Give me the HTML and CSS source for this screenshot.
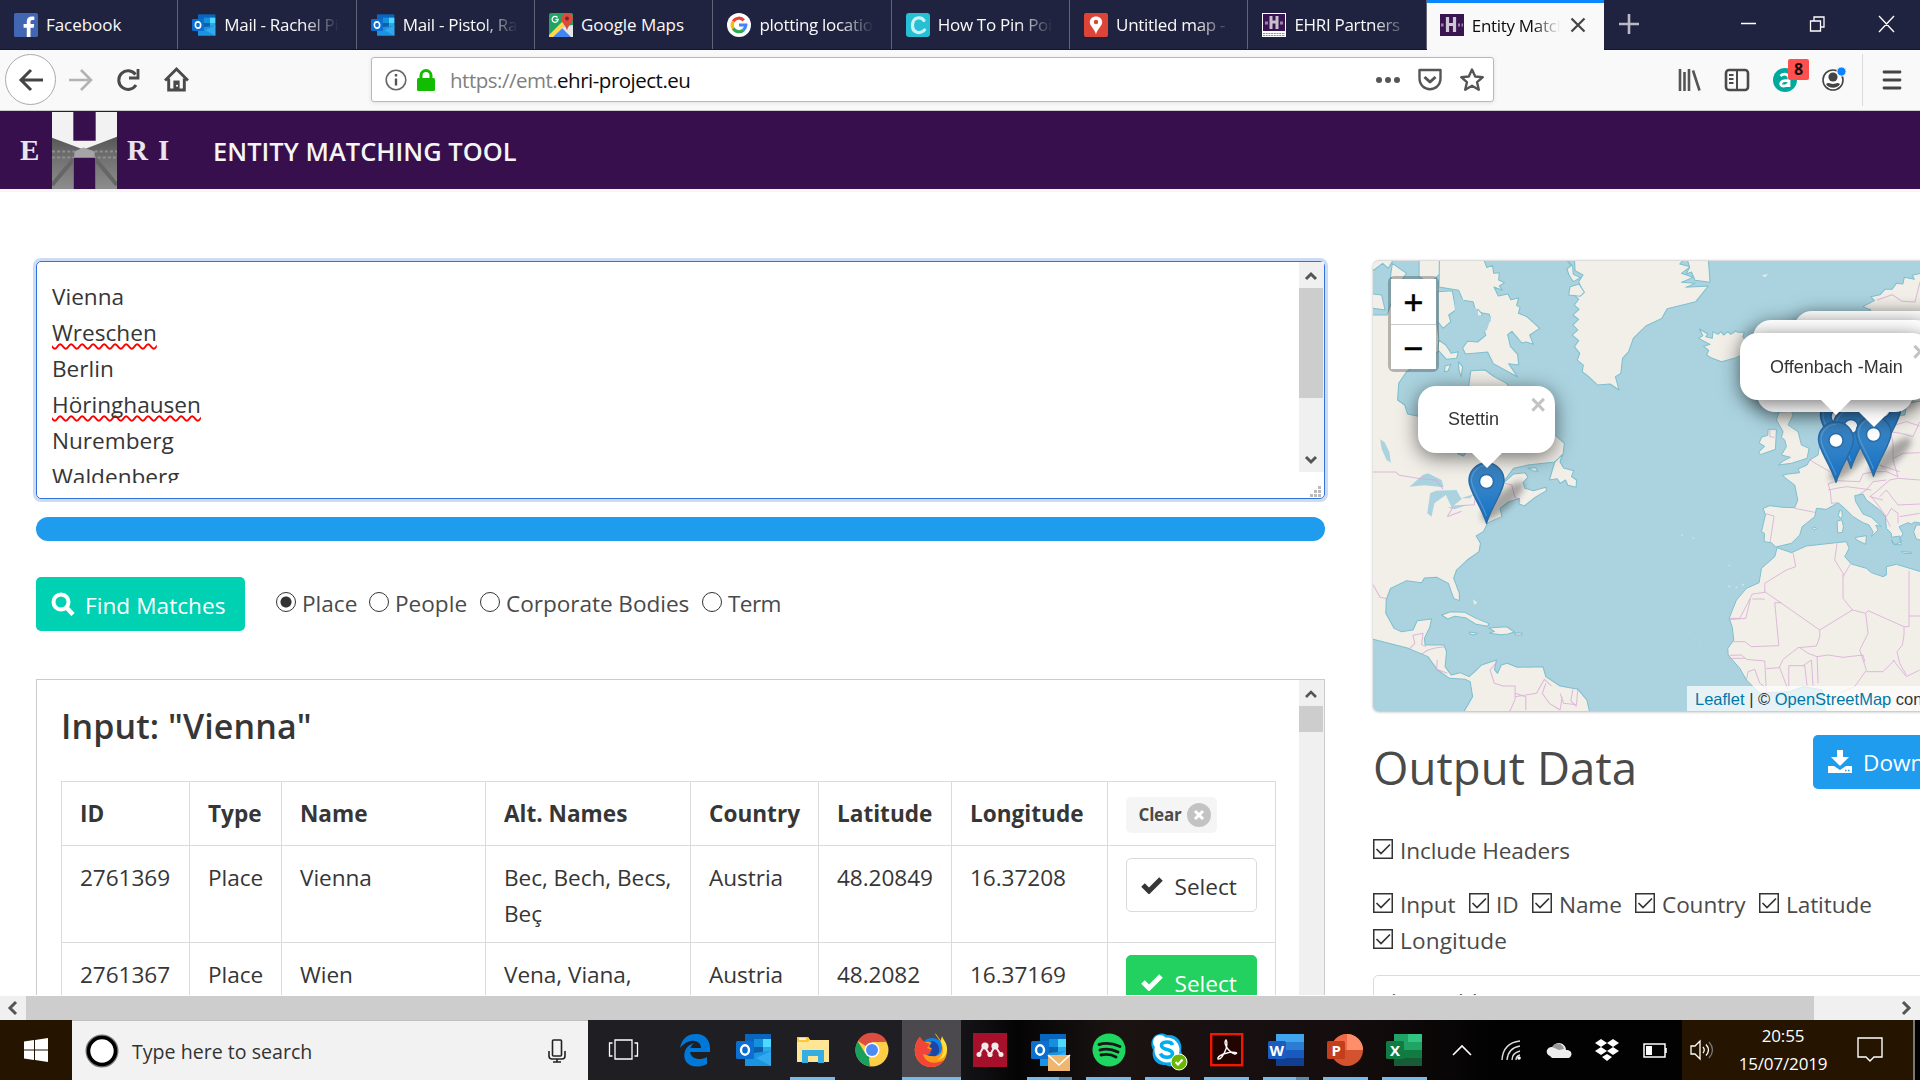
FILE: index.html
```html
<!DOCTYPE html>
<html lang="en">
<head>
<meta charset="utf-8">
<title>Entity Matching Tool</title>
<link rel="stylesheet" href="styles.css">
</head>
<body>
<svg class="defs" width="0" height="0">
  <defs>
    <linearGradient id="pinFill" x1="0" y1="0" x2="0" y2="1"><stop offset="0" stop-color="#3a82c0"/><stop offset=".5" stop-color="#2f80c6"/><stop offset="1" stop-color="#126fc6"/></linearGradient>
    <symbol id="pin" viewBox="0 0 38 62"><path d="M19 1C9 1 1.500 9 1.500 18.500 1.500 29 13 42 19 61 25 42 36.500 29 36.500 18.500 36.500 9 29 1 19 1z" fill="url(#pinFill)" stroke="#2a6ba3" stroke-width="1.500"/><path d="M19 3.500C10.500 3.500 4 10.500 4 18.500 4 27 13 38 19 54" fill="none" stroke="#6aa9da" stroke-width="1.200" opacity=".6"/><circle cx="19" cy="19.500" r="7" fill="#fff" stroke="#2b6da6" stroke-width="1.500"/></symbol>
    <symbol id="outlook" viewBox="0 0 36 34"><path d="M9 1h26v18H9z" fill="#0a66bd"/><path d="M18 6h9v8h-9z" fill="#1490df"/><path d="M27 6h8v8h-8z" fill="#50d9ff"/><path d="M18 14h9v8h-9z" fill="#0f5fa8"/><path d="M27 14h8v6h-8z" fill="#28a8ea"/><path d="M9 21l26-3v15H9z" fill="#1a94e0"/><path d="M35 18v15L20 25z" fill="#32a9ec"/><rect x="0" y="8" width="18" height="18" rx="1.500" fill="#0a6fd0"/><ellipse cx="9" cy="17" rx="4" ry="4.700" fill="none" stroke="#fff" stroke-width="2.400"/></symbol>
    <symbol id="check" viewBox="0 0 22 18"><path d="M2 9l6 6L20 3" fill="none" stroke="currentColor" stroke-width="5"/></symbol>
    <symbol id="ehri" viewBox="0 0 24 24"><path d="M0 1h24v22H0z" fill="#3a1450"/><path d="M7.500 4v15M14.500 4v15M8 11.500h7" stroke="#cfc8d4" stroke-width="3.200"/><path d="M1 12h2.500M18 12h2M21.500 12h1.500" stroke="#9b83a8" stroke-width="3"/></symbol>
    <symbol id="tick" viewBox="0 0 20 20"><rect x=".75" y=".75" width="18.500" height="18.500" fill="#fff" stroke="#333" stroke-width="1.500"/><path d="M3.500 10l4.500 4.500L17 5.500" fill="none" stroke="#333" stroke-width="1.700"/></symbol>
  </defs>
</svg>

<div class="tabs">
  <div class="tab"><svg class="fav" viewBox="0 0 24 24"><rect width="24" height="24" rx="1.500" fill="#4267b2"/><path d="M16.500 24v-9.300h3.200l.5-3.600h-3.700V8.800c0-1 .4-1.800 1.900-1.800h1.900V3.700c-4.800-.7-7.500.8-7.500 4.700v2.700h-3.200v3.600h3.200V24z" fill="#fff"/></svg><span class="tab-text t1">Facebook</span></div>
  <div class="tab"><svg class="fav"><use href="#outlook"/></svg><span class="tab-text">Mail - Rachel Pistol</span></div>
  <div class="tab"><svg class="fav"><use href="#outlook"/></svg><span class="tab-text">Mail - Pistol, Rachel</span></div>
  <div class="tab"><svg class="fav" viewBox="0 0 24 24"><rect width="24" height="24" rx="2" fill="#1fa463"/><path d="M2 24L14 11l10 12v1z" fill="#4285f4"/><path d="M0 22L16 6l3 4L4 24H0z" fill="#ffd84d"/><path d="M24 24V12l-8 1-3 2 9 9z" fill="#e6e6e6"/><path d="M18 0c-3.500 0-6 2.500-6 5.500 0 3.500 5 7 6 12 1-5 6-8.500 6-12C24 2.500 21.500 0 18 0z" fill="#dd4b3e"/><circle cx="18" cy="5.500" r="2" fill="#822"/><path d="M8.500 4.500a3 3 0 1 0 .6 2H6.500" fill="none" stroke="#fff" stroke-width="1.300"/></svg><span class="tab-text t4">Google Maps</span></div>
  <div class="tab"><svg class="fav" viewBox="0 0 24 24"><circle cx="12" cy="12" r="12" fill="#fff"/><g fill="none" stroke-width="3.200"><path d="M6.200 8.500A6.700 6.700 0 0 1 16.800 7.300" stroke="#ea4335"/><path d="M6.200 15.500A6.700 6.700 0 0 1 6.200 8.500" stroke="#fbbc05"/><path d="M16.500 17A6.700 6.700 0 0 1 6.200 15.400" stroke="#34a853"/><path d="M12 12h6.800a6.700 6.700 0 0 1-2.400 5" stroke="#4285f4"/></g></svg><span class="tab-text">plotting locations</span></div>
  <div class="tab"><svg class="fav" viewBox="0 0 24 24"><rect width="24" height="24" rx="3" fill="#26bfd4"/><path d="M18 7.500C15 3 7 4 6.500 12 6 20 14.500 21.500 18.500 17" fill="none" stroke="#c9f2f7" stroke-width="3.200" stroke-linecap="round"/></svg><span class="tab-text">How To Pin Point</span></div>
  <div class="tab"><svg class="fav" viewBox="0 0 24 24"><rect width="24" height="24" rx="2" fill="#db4437"/><path d="M12 3.500c-3.700 0-6.200 2.500-6.200 5.700 0 4 5 6.500 6.200 12.300 1.200-5.800 6.200-8.300 6.200-12.300 0-3.200-2.500-5.700-6.200-5.700z" fill="#fff"/><circle cx="12" cy="9" r="2.200" fill="#db4437"/></svg><span class="tab-text">Untitled map - Goo</span></div>
  <div class="tab"><svg class="fav" viewBox="0 0 24 24"><rect width="24" height="24" fill="#fff"/><path d="M1 1h22v17H1z" fill="#3a1450"/><path d="M9 3v13M15 3v13M9 9h6" stroke="#c9c0cf" stroke-width="3"/><path d="M3 10h3M18 10h3" stroke="#9b83a8" stroke-width="3"/><path d="M1 20.500h22M1 22.500h22" stroke="#c07a9c" stroke-dasharray="2 .7"/></svg><span class="tab-text">EHRI Partners | EH</span></div>
  <div class="tab active"><svg class="fav"><use href="#ehri"/></svg><span class="tab-text">Entity Matching</span><svg class="close" viewBox="0 0 16 16"><path d="M1.500 1.500l13 13M14.500 1.500l-13 13" stroke="#444" stroke-width="2.200"/></svg></div>
  <svg class="newtab" viewBox="0 0 22 22"><path d="M11 1v20M1 11h20" stroke="#b9bac3" stroke-width="2.600"/></svg>
  <svg class="winbtns" viewBox="0 0 160 24"><path d="M1 11.500h15M70.500 9h10v10h-10zM74 9V5h10v10h-3.500M139 4l15 16M154 4l-15 16" fill="none" stroke="#fff" stroke-width="1.300"/></svg>
</div>

<div class="toolbar">
  <div class="back"><svg width="28" height="24" viewBox="0 0 28 24"><path d="M26 12H4M14 2L4 12l10 10" fill="none" stroke="#444" stroke-width="3"/></svg></div>
  <svg class="fwd" viewBox="0 0 26 24"><path d="M1 12h21M13 2l10 10-10 10" fill="none" stroke="#b3b3b3" stroke-width="2.600"/></svg>
  <svg class="reload" viewBox="0 0 24 24"><path d="M20 17A9.300 9.300 0 1 1 19.500 6.500" fill="none" stroke="#4a4a4a" stroke-width="3"/><path d="M22 1v9h-9" fill="none" stroke="#4a4a4a" stroke-width="2.800"/></svg>
  <svg class="home" viewBox="0 0 24 24"><path d="M1 13L12 2l11 11M4.500 11v11h15V11" fill="none" stroke="#4a4a4a" stroke-width="2.800"/><path d="M9 22v-9h6v9z" fill="#4a4a4a"/><circle cx="12.500" cy="18" r="1" fill="#fff"/></svg>
  <div class="urlbar">
    <svg class="info" viewBox="0 0 22 22"><circle cx="11" cy="11" r="9.800" fill="none" stroke="#666" stroke-width="1.600"/><path d="M11 9.500v7M11 5v2.500" stroke="#555" stroke-width="2.400"/></svg>
    <svg class="lock" viewBox="0 0 18 22"><rect y="9" width="18" height="13" rx="1.500" fill="#12bc00"/><path d="M4 10V6.500a5 5 0 0 1 10 0V10" fill="none" stroke="#12bc00" stroke-width="3"/></svg>
    <span class="url"><span class="dim">https://emt.</span>ehri-project.eu</span>
    <svg class="urlicons" viewBox="0 0 110 28"><g fill="#555"><circle cx="4" cy="14" r="3"/><circle cx="13" cy="14" r="3"/><circle cx="22" cy="14" r="3"/></g><g fill="none" stroke="#555" stroke-width="2.400" stroke-linejoin="round"><path d="M44.500 4h21v8c0 15-21 15-21 0z"/><path d="M49.500 11l5.500 5 5.500-5" stroke-width="3"/><path d="M97 3.500l3.200 7 7.600.7-5.700 5 1.700 7.500-6.800-4-6.800 4 1.700-7.500-5.700-5 7.600-.7z"/></g></svg>
  </div>
  <svg class="righticons" viewBox="0 0 242 60">
    <path d="M4 19v22M8.500 22v19M13 19v22M17 20.500l6.500 20" stroke="#555" stroke-width="2.600"/>
    <rect x="50" y="20" width="22" height="20" rx="3" fill="none" stroke="#4a4a4a" stroke-width="2.600"/><path d="M61 20v20M53 25h4.500M53 29h4.500M53 33h4.500" stroke="#4a4a4a" stroke-width="2"/>
    <circle cx="109" cy="30" r="12" fill="#00a99d"/><path d="M104.500 26c3-3 8.500-2.200 8.500 2v9m0-6c-9-2-10.500 5-5.500 5 3 0 5.500-2 5.500-4" fill="none" stroke="#fff" stroke-width="2.800"/>
    <rect x="112" y="9" width="21" height="21" rx="2" fill="#ff4f4f"/>
    <circle cx="157" cy="30" r="10" fill="#fff" stroke="#444" stroke-width="1.600"/><circle cx="157" cy="27" r="4.600" fill="#444"/><path d="M150 34c3-2 4 0 7 0s4-2 7 0c-2.500 5-11.500 5-14 0z" fill="#444"/><circle cx="165.500" cy="21.500" r="4.600" fill="#0a84ff" stroke="#f9f9fa" stroke-width="1"/>
    <path d="M186.500 4v52" stroke="#dcdcdc"/><path d="M208 22h16M208 30h16M208 38h16" stroke="#444" stroke-width="2.800" stroke-linecap="round"/>
    <text x="118" y="25" class="count">8</text>
  </svg>
</div>

<header class="header">
  <div class="logo"><span>E</span>
    <svg viewBox="0 0 64 78" preserveAspectRatio="none"><defs><linearGradient id="road" x1="0" y1="0" x2="0" y2="1"><stop offset="0" stop-color="#555"/><stop offset=".4" stop-color="#707070"/><stop offset="1" stop-color="#8d8d8d"/></linearGradient><clipPath id="hh"><path d="M0 0h21v29h22V0h21v78H43V46H21v32H0z"/></clipPath></defs><g clip-path="url(#hh)"><path d="M0 0h64v78H0z" fill="#f2f2f2"/><path d="M0 26l31 12 33-13v53H0z" fill="url(#road)"/><path d="M0 40h22M0 46h26M42 40h22M40 46h24" stroke="#8f8f8f" stroke-width="2" stroke-dasharray="3 2"/><path d="M0 74l21-26M64 74L43 48" stroke="#666" stroke-width="4"/><path d="M22 40l9-4 11 4v6H22z" fill="#a5a5a5"/></g></svg>
    <span class="r">R</span><span>I</span></div>
  <h1>ENTITY MATCHING TOOL</h1>
</header>

<main class="main">
  <section class="left">
    <div class="textarea">
      <div class="lines"><div>Vienna</div><div><span class="miss">Wreschen</span></div><div>Berlin</div><div><span class="miss">Höringhausen</span></div><div>Nuremberg</div><div>Waldenberg</div></div>
      <div class="vscroll ta"><svg viewBox="0 0 24 26"><path d="M7 17l5-5 5 5" fill="none" stroke="#555" stroke-width="3"/></svg><div class="thumb"></div><svg viewBox="0 0 24 26"><path d="M7 11l5 5 5-5" fill="none" stroke="#555" stroke-width="3"/></svg></div>
      <svg class="grip" viewBox="0 0 12 12" fill="#bbb"><path d="M0 9h3v3H0zM4 9h3v3H4zM8 9h3v3H8zM4 5h3v3H4zM8 5h3v3H8zM8 1h3v3H8z"/></svg>
    </div>
    <div class="progress"></div>
    <div class="controls">
      <button class="btn primary"><svg width="24" height="24" viewBox="0 0 24 24"><circle cx="10" cy="10" r="7.500" fill="none" stroke="#fff" stroke-width="4"/><path d="M15.500 15.500l6.500 7" stroke="#fff" stroke-width="4.500"/></svg><span>Find Matches</span></button>
      <div class="radios">
        <i class="radio on"></i><span class="w1">Place</span><i class="radio"></i><span class="w2">People</span><i class="radio"></i><span class="w3">Corporate Bodies</span><i class="radio"></i><span class="w4">Term</span>
      </div>
    </div>
    <div class="results">
      <div class="results-body">
        <h3>Input: "Vienna"</h3>
        <table>
          <colgroup><col class="c1"><col class="c2"><col class="c3"><col class="c4"><col class="c5"><col class="c6"><col class="c7"><col class="c8"></colgroup>
          <tr class="head"><th>ID</th><th>Type</th><th>Name</th><th>Alt. Names</th><th>Country</th><th>Latitude</th><th>Longitude</th><th class="act"><span class="tag">Clear<svg width="24" height="24" viewBox="0 0 24 24"><circle cx="12" cy="12" r="12" fill="#c3c3c3"/><path d="M8 8l8 8M16 8l-8 8" stroke="#fff" stroke-width="3"/></svg></span></th></tr>
          <tr><td>2761369</td><td>Place</td><td>Vienna</td><td>Bec, Bech, Becs, Beç</td><td>Austria</td><td>48.20849</td><td>16.37208</td><td class="act"><button class="btn select"><svg width="22" height="18"><use href="#check"/></svg>Select</button></td></tr>
          <tr><td>2761367</td><td>Place</td><td>Wien</td><td>Vena, Viana,</td><td>Austria</td><td>48.2082</td><td>16.37169</td><td class="act"><button class="btn select chosen"><svg width="22" height="18"><use href="#check"/></svg>Select</button></td></tr>
        </table>
      </div>
      <div class="vscroll"><svg viewBox="0 0 24 26"><path d="M7 17l5-5 5 5" fill="none" stroke="#555" stroke-width="2.600"/></svg><div class="thumb short"></div></div>
    </div>
  </section>

  <section class="right">
    <div class="map">
      <svg class="world" viewBox="36 33 1532 1350" preserveAspectRatio="none">
        <g class="land">
          <path d="M20 195H75L90 150 130 160 215 220 225 300 130 365 108 400 105 450 125 465 133 492 170 500 230 560 275 612 290 618 300 600 290 520 305 400 310 362 350 360 375 380 410 400 440 440 470 430 500 470 546 555 572 580 568 616 545 636 470 645 430 655 405 690 400 700 430 672 462 668 470 682 456 698 462 715 485 722 520 712 522 722 490 742 460 768 445 762 446 745 415 756 392 775 397 800 358 818 345 845 325 858 337 880 333 905 300 930 270 960 262 985 278 1030 278 1052 262 1045 247 1000 215 982 180 984 172 998 130 992 85 1015 73 1050 72 1090 95 1135 115 1145 148 1140 160 1112 200 1107 195 1132 180 1165 182 1185 235 1185 242 1205 238 1250 255 1275 280 1268 305 1280 318 1268 340 1245 382 1230 376 1258 385 1270 395 1245 412 1240 440 1252 512 1250 520 1280 560 1308 610 1318 635 1350 645 1395H285L315 1340 308 1295 295 1288 250 1285 215 1258 190 1220 135 1195 36 1168 20 1160z"/>
          <path d="M20 25h75l-16 30-16-15-24 20-19-5zM90 40l40 30-30 45-15-35zM165 25h60v45l-30 30-30-20zM20 130l40 5 10 45-34-5z"/>
          <path d="M222 25h123l10 28 16-7 3 24 16-2-2 22 16 8-14 10 8 13-23-10 12 27 27-6 8 17 22-5-6 22 10 6-5 18 24 10 36 35-28 20 10 28-20-7-12 3-28-35-12 10 8 35 20 24 3 32-28-4 25 40-68-40-16-35-62 6-8-18 14-20 28 2 23-20-8-25 20-18-2-20-38-8-8-30-28-4-12-30-55-10z"/>
          <path d="M218 125l40-3 10 58-20 15 6 20-22 20-14-20zM316 185l14-7 12 14-8 18-16-2zM220 270l20 15 15 25 20-5-5 20-28 3-24-28zM238 348l16-5-8 20-10 2zM275 335l12 15-4 30-6-18z"/>
          <path d="M600 25H910L895 42 925 50 900 70 932 82 900 97 938 100 912 112 975 108 940 155 860 176 845 205 800 228 765 265 752 305 735 325 730 370 715 380 725 420 700 402 665 405 640 380 622 365 625 345 608 330 615 310 600 290 612 272 594 255 610 240 596 225 612 208 596 195 613 178 600 165 612 148 600 135 622 120 612 95 624 75 602 62z"/>
          <path d="M575 25l20 23 2 25 20 10-20 12-12-20-6-18 12-10zM588 110l25-8 15 25-12 12-32-4zM915 25h60l5 72-42-6-10-25-15 6 10-20z"/>
          <path d="M948 265l12-8-10-20 24 15-6 8 18 5 2-20 14 8 8-8 8 10 12-10 8 8 14-10 6 4 18 0-4 14 10 12-8 40-26 12-36 10-26-10-16-10 6-14-14-12 18-6z"/>
          <path d="M1590 65L1546 76 1552 88 1524 82 1520 102 1502 100 1490 118 1470 118 1456 134 1430 140 1440 152 1408 170 1430 180 1415 200 1440 230 1470 470 1590 480z"/>
          <path d="M566 614L545 636 530 690 552 686 560 700 575 690 582 706 605 712 606 690 592 680 598 662 570 654 560 636zM470 654l22 0 6 10-14-2z"/>
          <path d="M228 1095l25-10 40 2 32 18 36 16-4 8-32-6-30-20-30-4-20 8zM360 1134l50-4 22 16-18 6-20 2-32-4 14-6zM308 1146l20 4-10 5-12-4zM434 1148l20 2-4 6-16-2z"/>
          <path class="isle" d="M1126 76l16-4-8 10zM1030 944l8 4-4 0zM1030 1006l8 4-4 2zM1050 1012l6-2 0 4zM1070 1004l6-4-4 8zM900 852l4 4-4 2zM932 860l4 4-4 2zM316 1048l12 10-8 6zM936 1166l4 2zM950 1190l4-4z"/>
        </g>
        <g class="land" transform="matrix(.933 0 0 1 1007.300 450)">
          <path d="M620 0L560 10 556 45 530 48 440 50 330 60 300 130 295 165 270 180 262 195 235 207 240 218 205 222 188 226 202 238 225 255 234 300 225 323 190 322 150 317 130 325 137 345 125 395 134 400 133 425 155 428 168 441 185 437 215 430 240 405 247 380 285 350 290 325 320 328 355 308 375 325 400 350 430 368 448 375 460 395 455 410 475 390 468 375 485 380 455 352 430 342 408 305 405 287 430 282 440 300 480 330 497 350 500 385 515 400 515 412 540 408 545 425 525 435 515 418 520 432 545 435 540 415 550 402 538 380 565 368 575 372 585 366 620 372z"/>
          <path d="M178 36L215 34 220 45 205 75 235 95 245 135 268 145 262 175 215 190 175 195 192 182 212 172 185 165 200 140 195 120 185 112 190 95 170 60zM145 88l25 0-3 60-45 16-5-8 18-17-17-10 8-18 18-5zM360 330l6 2 2 16-5 8-7-10zM352 364l14-5 5 20-3 18-14 2zM408 412l32-5-2 26-30-15zM545 455l32 2-2 4-24-1zM278 384l8-3 4 5-7 4zM590 375h30v50l-30-8-8-22z"/>
          <path d="M172 443L215 458 260 438 350 428 380 425 388 445 375 470 395 492 440 505 455 518 490 530 500 525 500 500 530 493 620 520V945H320L310 895 308 870 250 860 210 875 120 880 80 840 60 805 25 765 24 745 42 720 37 680 28 655 50 600 80 565 118 548 125 505 165 470z"/>
        </g>
        <g class="water"><path d="M138 710L175 675 190 670 228 690 234 712 180 706zM196 730L212 722 270 720 284 748 256 772 240 735 208 760 200 800 188 790zM245 772l55-8-35 14zM282 745l36-12-10 12zM56 568l12 8 14 30 4 32-12-8-14-34z"/><path d="M265 130L300 160 330 180 330 195 350 200 368 198 355 240 320 262 295 262 260 240 265 190z"/></g>
        <g class="borders"><path d="M36 666H100L110 676 170 686 212 690 232 718M244 800L262 768 320 764 325 700M244 800l40-16M405 700l20 6 8 34 16 16M36 1004l20 38 20 4M135 1200l18-20-5-24 28-6-4 34 12 6M170 1214l20-14 20-6 28-4M216 1230l-2 28 30 12M382 1236l-18 24 12 40 24 8 34 0 0 40-14 34-18 10M434 1330l30 10 0 40M434 1340l60-10 22-42 20 20M520 1300l-10 30 20 30 30 20 6-40M560 1330l10 30 36 4 4-50M596 1318l-6 34 16 18M1568 96l-14 60-36-2-28-20-42 16"/></g>
        <g class="borders" transform="matrix(.933 0 0 1 1007.300 450)">
          <path d="M220 458L228 500 200 510 135 550V577L98 582 60 655H28M98 597H135M92 597L78 655 28 659M135 575L300 690 398 630 370 595V520L345 480 352 430M370 530L392 492M185 608H165L177 737 95 740 75 725H38M300 690V710L290 738 235 743 190 778 178 803M398 630L438 640 445 632 553 680V705L548 735 532 755 540 790 560 825M438 640L445 700 420 750 440 810 405 860 360 880M553 680H568V512M568 648H600M295 850L292 770 325 765 370 772 430 765 435 785M140 880L135 783 80 778 65 765 30 766M30 775H75M140 806L180 803 205 870M207 860V797H255L262 857M250 797L275 780 280 857M240 743L265 760 292 770M80 840L85 815 105 808 120 850 135 860M440 815L490 815 525 780M520 780L560 830 600 810"/>
          <path d="M133 340L163 348 151 426M225 325L285 337M270 180L330 215M325 250L332 275 335 310 350 308M325 252L350 242 420 245 430 222 460 215 500 215 535 230M325 270L350 265 380 260 420 265 455 270M420 282L440 270 460 245 500 240M450 290L470 275 510 240 535 235 600 240M455 290L480 322M480 290L500 270 535 315 600 312M480 322L500 350 515 325 535 340 535 370M497 350L512 380M540 350L600 340M450 290L490 300M500 210L480 195 540 215M510 75L520 130 520 180 535 230M510 95L545 100 580 110 600 65M520 175L550 160 600 158M510 80L560 65 600 78M150 88v22l14 2"/></g>
      </svg>
      <svg class="pins" viewBox="0 0 547 450">
        <g class="pinshadow"><ellipse cx="130" cy="240" rx="28" ry="8" transform="rotate(-42 130 240)"/><ellipse cx="478" cy="200" rx="28" ry="8" transform="rotate(-42 478 200)"/><ellipse cx="517" cy="196" rx="28" ry="8" transform="rotate(-42 517 196)"/></g>
        <use href="#pin" x="491" y="130" width="38" height="62"/><use href="#pin" x="446" y="136" width="38" height="62"/><use href="#pin" x="459" y="146" width="38" height="62"/>
        <use href="#pin" x="481.500" y="154" width="38" height="62"/><use href="#pin" x="444" y="160" width="38" height="62"/><use href="#pin" x="94.500" y="201" width="38" height="62"/>
      </svg>
      <div class="popup p1"></div><div class="popup p2"></div><div class="popup p3 tip"></div>
      <div class="popup p4 tip"><span>Offenbach -Main</span><b>×</b></div>
      <div class="popup p5 tip"><span>Stettin</span><b>×</b></div>
      <div class="zoom"><div>+</div><div>−</div></div>
      <div class="attr"><a>Leaflet</a> | © <a>OpenStreetMap</a> contributors</div>
    </div>
    <div class="outhead"><h2>Output Data</h2><button class="btn download"><svg width="24" height="24" viewBox="0 0 24 24" fill="#fff"><path d="M9 0h6v7h6l-9 9-9-9h6z"/><path d="M0 16h6l6 4 6-4h6v7H0z"/><path d="M17 20.500h1.500M20 20.500h1.500" stroke="#209cee" stroke-width="1.500"/></svg><span>Download</span></button></div>
    <div class="opts o1"><svg><use href="#tick"/></svg><span>Include Headers</span></div>
    <div class="opts o2"><svg><use href="#tick"/></svg><span class="k1">Input</span><svg><use href="#tick"/></svg><span class="k2">ID</span><svg><use href="#tick"/></svg><span class="k3">Name</span><svg><use href="#tick"/></svg><span class="k4">Country</span><svg><use href="#tick"/></svg><span>Latitude</span></div>
    <div class="opts"><svg><use href="#tick"/></svg><span class="k6">Longitude</span></div>
    <div class="output">input, id</div>
  </section>
</main>

<div class="hscroll"><svg viewBox="0 0 26 24"><path d="M16 6l-6 6 6 6" fill="none" stroke="#555" stroke-width="3"/></svg><div class="hthumb"></div><svg class="end" viewBox="0 0 26 24"><path d="M9 6l6 6-6 6" fill="none" stroke="#555" stroke-width="3"/></svg></div>

<div class="taskbar">
  <div class="start"><svg width="24" height="24" viewBox="0 0 24 24" fill="#fff"><path d="M0 3.500l10-1.400v9.400H0zM11 2l13-2v11.500H11zM0 12.500h10v9.400L0 20.500zM11 12.500h13V24l-13-2z"/></svg></div>
  <div class="search"><svg width="34" height="34" viewBox="0 0 34 34"><circle cx="17" cy="17" r="14.500" fill="#fff" stroke="#777" stroke-width="4"/><circle cx="17" cy="17" r="13.500" fill="none" stroke="#000" stroke-width="3.600"/></svg><span>Type here to search</span><svg class="mic" viewBox="0 0 18 24"><rect x="4.500" y="1" width="9" height="16" rx="1" fill="none" stroke="#222" stroke-width="1.600"/><path d="M1 12v5q0 3 3 3h10q3 0 3-3v-5M9 20v3M5 23h8" fill="none" stroke="#222" stroke-width="1.600"/></svg></div>
  <div class="taskview"><svg width="32" height="22" viewBox="0 0 32 22"><path d="M7 1h17v19H7zM4.500 4H1.500v13h3M26.500 4h3v13h-3" fill="none" stroke="#fff" stroke-width="1.300"/></svg></div>
  <div class="app"><svg viewBox="0 0 34 34"><path d="M2 15C4 5 10 1 18 1c10 0 15 7 14 18H12c1 7 10 9 17 5v7C15 38 3 30 7 18c2-5 6-7 9-8-2 2-3 3-3.500 5H23c0-8-12-11-21 0z" fill="#0078d7"/></svg></div>
  <div class="app"><svg class="wide"><use href="#outlook"/></svg></div>
  <div class="app run"><svg viewBox="0 0 34 34"><path d="M1 4h11l2 3h19v22H1z" fill="#ffe594"/><path d="M1 4h11l2 3-2 2H1z" fill="#fdc73a"/><path d="M3 6h7" stroke="#fff" stroke-width="1.500"/><path d="M6 17h22v13h-6v-7h-10v7H6z" fill="#35aee2"/></svg></div>
  <div class="app"><svg viewBox="0 0 34 34"><circle cx="17" cy="17" r="16.500" fill="#ffcd46"/><path d="M17 17L3 8A16.500 16.500 0 0 1 32 9H17z" fill="#dc4e41"/><path d="M17 17l-3 9 1 7.500A16.500 16.500 0 0 1 2.800 8.300L10 20z" fill="#1a9f5c"/><circle cx="17" cy="17" r="7.500" fill="#fff"/><circle cx="17" cy="17" r="6" fill="#4c8bf5"/></svg></div>
  <div class="app run current"><svg viewBox="0 0 34 34"><circle cx="18" cy="17" r="12" fill="#0a84e8"/><path d="M18 8c5 1 8 5 7 11-3 6-11 7-14 2 2 1 5 1 7-1-6 1-8-2-8-6 2-2 3-1 5 0-1-3 1-5 3-6z" fill="#1b46a8"/><path d="M21 0c1 5 7 7 7 15 0 7-6 9-10 8-5 0-7-2-8-5 2 1 4 1 6 0l2-3c-4 0-3-3 0-5-4-2-6-1-8-1-3-2-4-3-4-5-3 3-6 9-5 16 1 8 8 14 16 14 10 0 16-8 16-16 0-8-4-10-5-14-1 2-1 4-1 5-2-4-4-6-6-9z" fill="#ff9a14"/><path d="M6 4C3 7 0 13 1 20c2 9 8 14 16 14 6 0 11-3 13-7-9 5-19 3-21-6 2 1 4 1 6 0l3-4-5-2 3-4-6-2z" fill="#f2453a"/><path d="M21 0c3 6 9 9 8 19-1 5-4 7-6 8 7-1 10-6 10-11 0-7-4-9-5-13l-1 5z" fill="#ffe13c"/></svg></div>
  <div class="app"><svg viewBox="0 0 34 34"><rect width="34" height="34" fill="#a6102a"/><g fill="#f3e9eb"><circle cx="12" cy="13" r="3.600"/><circle cx="22" cy="13" r="3.600"/><circle cx="17" cy="21.500" r="2.600"/><circle cx="6" cy="21.500" r="2.500"/><circle cx="28" cy="21.500" r="2.500"/></g><path d="M6 22l5-9 6 9 5-9 6 9" fill="none" stroke="#f3e9eb" stroke-width="2"/></svg></div>
  <div class="app run split"><svg class="wide" viewBox="0 0 36 34"><use href="#outlook" width="36" height="34"/><path d="M17 22h22v16H17z" fill="#efb670"/><path d="M17 22l11 10 11-10" fill="none" stroke="#fff" stroke-width="1.600"/></svg></div>
  <div class="app run"><svg viewBox="0 0 34 34"><circle cx="17" cy="17" r="16.500" fill="#1ed760"/><path d="M7 11.500q10-3 21 2M8 17q9-2.500 18 2M9 22q8-2 15 2" fill="none" stroke="#171717" stroke-width="2.900" stroke-linecap="round"/></svg></div>
  <div class="app run"><svg viewBox="0 0 34 34"><path d="M8 1c3-1 6 0 8 1 10-1 16 7 14 16 3 6 0 14-8 15-3 1-6 0-7-1C6 33 0 26 2 17-2 9 2 2 8 1z" fill="#0aa5e8"/><circle cx="16" cy="17" r="12.500" fill="#fff"/><circle cx="9" cy="9" r="7" fill="#fff"/><path d="M21.500 12c-1-4-11-4-11 .500 0 5 11 3 11 8 0 5-10 5-12 0" fill="none" stroke="#00aff0" stroke-width="3.600"/><circle cx="28" cy="29" r="8" fill="#6bb700" stroke="#fff"/><path d="M24.500 29l2.500 2.500 4.500-5" fill="none" stroke="#fff" stroke-width="2"/></svg></div>
  <div class="app run"><svg viewBox="0 0 34 34"><rect x="1.200" y="1.200" width="31" height="31" fill="#230400" stroke="#f01800" stroke-width="2.400"/><path d="M16 7c-3 3 2 12 9 14 5-1-2-3-8-1-5 1-10 4-9 6 3 1 6-5 8-10 1-4 1-8 0-9z" fill="none" stroke="#fff" stroke-width="1.400"/></svg></div>
  <div class="app run split"><svg class="wide" viewBox="0 0 36 34"><path d="M8 1h28v8H8z" fill="#41a5ee"/><path d="M8 9h28v8H8z" fill="#2b7cd3"/><path d="M8 17h28v8H8z" fill="#185abd"/><path d="M8 25h28v8H8z" fill="#103f91"/><rect y="8" width="18" height="18" rx="1.500" fill="#1b5cbe"/><text x="1.500" y="22.500" class="glyph">W</text></svg></div>
  <div class="app run"><svg class="wide" viewBox="0 0 36 34"><circle cx="20" cy="17" r="16" fill="#d35230"/><path d="M20 1a16 16 0 0 1 16 16H20z" fill="#ff8f6b"/><path d="M20 1a16 16 0 0 0-16 16h16z" fill="#ed6c47"/><rect y="8" width="18" height="18" rx="1.500" fill="#c43e1c"/><text x="4.500" y="22.500" class="glyph">P</text></svg></div>
  <div class="app run"><svg class="wide" viewBox="0 0 36 34"><path d="M8 1h14v16H8z" fill="#21a366"/><path d="M22 1h14v8H22z" fill="#33c481"/><path d="M22 9h14v8H22z" fill="#21a366"/><path d="M8 17h28v8H8z" fill="#107c41"/><path d="M8 25h28v8H8z" fill="#185c37"/><rect y="8" width="18" height="18" rx="1.500" fill="#107c41"/><text x="4" y="22.500" class="glyph">X</text></svg></div>
  <svg class="tray" viewBox="0 0 240 60"><path d="M20 35l9-9 9 9" fill="none" stroke="#fff" stroke-width="1.600"/>
    <g fill="none" stroke="#ddd" stroke-width="1.400"><path d="M69 40Q70 23 87 21M74 40Q75 28 87 26M79 40Q79 33 87 31M83 40q0-4 4-5"/></g><circle cx="86" cy="38" r="1.800" fill="#fff"/>
    <path d="M117 36c-6-3-3-10 3-9 3-7 13-4 13 3 8 0 6 8 2 8h-16z" fill="#eee"/><path d="M119 27c3-6 11-4 12 2l-5 1z" fill="#999"/>
    <path d="M168 19l6 4-6 4-6-4zM180 19l6 4-6 4-6-4zM168 27l6 4-6 4-6-4zM180 27l6 4-6 4-6-4zM174 34l5 3-5 4-5-4z" fill="#fff"/>
    <path d="M211 24h21v13h-21zM233 28v5" fill="none" stroke="#fff" stroke-width="1.500"/><path d="M213 26h6v9h-6z" fill="#fff"/></svg>
  <div class="clockzone"><svg width="24" height="24" viewBox="0 0 24 24"><path d="M1 8h4l5-5v18l-5-5H1zM13 9q2.500 3 0 6M16 6.500q5 5.500 0 11" fill="none" stroke="#fff" stroke-width="1.300"/><path d="M19 4q7 8 0 16" fill="none" stroke="#777" stroke-width="1.300"/></svg><div class="clock"><div>20:55</div><div>15/07/2019</div></div><svg width="26" height="26" viewBox="0 0 26 26"><path d="M1 1h24v19h-8l-4 4-4-4H1z" fill="none" stroke="#fff" stroke-width="1.400"/></svg></div>
</div>
</body>
</html>
```
FILE: styles.css
```css
* { box-sizing: border-box; }
html, body { margin: 0; width: 1920px; height: 1080px; overflow: hidden; background: #fff; }
body { display: flex; flex-direction: column; font-family: "Open Sans", "Noto Sans", sans-serif; font-size: 22.6px; line-height: 36px; color: #363636; }
svg { display: block; flex: none; }
.defs { position: absolute; }
h1, h2, h3 { margin: 0; }

/* Browser tabs */
.tabs { display: flex; height: 50px; flex: none; background: #202340; align-items: stretch; border-bottom: 1px solid #15172e; }
.tab { width: 178.350px; flex: none; display: flex; align-items: center; padding-left: 14px; border-right: 1px solid #636577; color: #f9f9fa; position: relative; }
.fav { width: 24px; height: 24px; margin-right: 8px; }
.tab-text { width: 117px; overflow: hidden; white-space: nowrap; font-size: 17px; letter-spacing: -.3px; line-height: 30px; padding-top: 1px; -webkit-mask-image: linear-gradient(90deg, #000 68%, transparent 98%); }
.t1, .t4 { -webkit-mask-image: none; letter-spacing: -.05px; }
.tab.active { width: 177px; height: 50px; background: #f9f9fa; color: #0c0c0d; border-right: 0; border-top: 3px solid #0a84ff; padding: 0 0 3px 13px; }
.active .tab-text { width: 90px; }
.close { width: 16px; height: 16px; margin-left: 8px; }
.newtab { width: 22px; height: 22px; margin: 13px 0 0 14px; }
.winbtns { width: 160px; height: 24px; margin: 12px 20px 0 auto; }

/* Navigation toolbar */
.toolbar { display: flex; height: 61px; flex: none; align-items: center; background: #f9f9fa; border-bottom: 1px solid #ccc; padding-bottom: 1px; }
.back { width: 51px; height: 51px; margin-left: 5px; border: 1px solid #aaa; border-radius: 50%; background: #fff; display: flex; align-items: center; justify-content: center; }
.fwd { width: 26px; height: 24px; margin-left: 12px; }
.reload { width: 24px; height: 24px; margin-left: 22px; }
.home { width: 25px; height: 25px; margin-left: 24px; }
.urlbar { width: 1123px; height: 45px; margin-left: 182px; border: 1px solid #b9b9b9; border-radius: 3px; background: #fff; box-shadow: 0 1px 4px rgba(0,0,0,.1); display: flex; align-items: center; padding: 0 8px 0 13px; }
.info { width: 22px; height: 22px; }
.lock { width: 18px; height: 22px; margin: 0 15px 0 10px; }
.url { font-size: 20.500px; letter-spacing: -.5px; color: #0c0c0d; flex: 1; }
.dim { color: #808080; }
.urlicons { width: 110px; height: 28px; }
.righticons { width: 242px; height: 60px; margin-left: 182px; }
.count { font: bold 16px "Open Sans", sans-serif; fill: #111; }

/* Application header */
.header { height: 78px; flex: none; background: #360f4c; display: flex; align-items: center; color: #f5f5f5; }
.logo { width: 180px; display: flex; align-items: flex-end; height: 78px; padding-left: 20px; font: bold 29px/30px "Liberation Serif", serif; color: #e9e5ec; }
.logo span { margin-bottom: 24px; width: 20px; }
.logo .r { width: 31px; margin-left: 10px; }
.logo svg { width: 65px; height: 77px; margin-left: 12px; }
.header h1 { margin-left: 33px; padding-top: 2px; font-size: 25.400px; font-weight: 600; letter-spacing: .05px; white-space: nowrap; }

/* Page columns */
.main { height: 806px; flex: none; display: flex; gap: 48px; padding: 72px 0 0 36px; overflow: hidden; box-shadow: inset 0 3px #f6f6f6; }
.left { width: 1289px; flex: none; }
.right { width: 700px; flex: none; color: #4a4a4a; margin-top: -1px; }
.textarea { position: relative; height: 238px; border: 1px solid #3273dc; border-radius: 5px; box-shadow: 0 0 0 3px rgba(50,115,220,.25); padding: 17px 0 0 15px; }
.lines { height: 204px; overflow: hidden; }
.miss { text-decoration: underline wavy #f00 1.500px; text-decoration-skip-ink: none; text-underline-offset: 2px; }
.vscroll { width: 25px; background: #f0f0f0; flex: none; display: flex; flex-direction: column; }
.vscroll svg { width: 24px; height: 26px; }
.vscroll.ta { position: absolute; top: 0; right: 0; height: 210px; justify-content: space-between; }
.thumb { width: 24px; height: 110px; background: #cdcdcd; margin-bottom: 48px; }
.thumb.short { height: 26px; }
.grip { position: absolute; right: 2px; bottom: 1px; width: 12px; height: 12px; }
.progress { margin-top: 18px; height: 24px; border-radius: 12px; background: #209cee; }
.controls { display: flex; margin-top: 36px; height: 54px; }
.btn { font: inherit; height: 54px; border: 0; border-radius: 5px; display: flex; align-items: center; white-space: nowrap; padding: 3px 0 0 14px; }
.btn svg { margin-top: -3px; }
.primary { width: 209px; background: #00d1b2; color: #fff; gap: 10px; padding-left: 15px; letter-spacing: .05px; }
.radios { display: flex; margin-left: 31px; padding-top: 9px; color: #4a4a4a; white-space: nowrap; }
.radio { width: 20px; height: 20px; margin: 6px 6px 0 0; border: 1.500px solid #333; border-radius: 50%; flex: none; background: #fff; }
.radio.on { background: radial-gradient(circle, #333 0 5px, #fff 6px); }
.w1 { width: 67px; } .w2 { width: 85px; } .w3 { width: 196px; letter-spacing: -.05px; } .w4 { letter-spacing: -.6px; }
.results { display: flex; height: 500px; margin-top: 48px; border: 1px solid #ccc; }
.results-body { flex: 1; padding: 24px 22px 0 24px; }
h3 { font-size: 34px; font-weight: 600; line-height: 44px; letter-spacing: .1px; }
table { table-layout: fixed; width: 1215px; margin-top: 33px; border-collapse: collapse; }
th, td { border: 1px solid #dbdbdb; padding: 14px 10px 0 18px; text-align: left; vertical-align: top; }
td { height: 97px; letter-spacing: -.05px; }
th { height: 64px; white-space: nowrap; }
.c1 { width: 128px; } .c2 { width: 92px; } .c3 { width: 204px; } .c4 { width: 205px; } .c5 { width: 128px; } .c6 { width: 133px; } .c7 { width: 156px; } .c8 { width: 168px; }
td.act { padding: 12px 10px 0 17.500px; } th.act { padding: 15px 10px 0 17.500px; }
.tag { display: flex; align-items: center; width: 91px; height: 36px; background: #f5f5f5; border-radius: 5px; padding-left: 13px; gap: 5px; font-size: 17px; letter-spacing: -.2px; color: #4a4a4a; }
.select { width: 131px; border: 1px solid #dbdbdb; background: #fff; color: #363636; gap: 12px; }
.chosen { background: #23d160; border-color: #23d160; color: #fff; }

/* Map panel */
.map { position: relative; height: 451px; border-radius: 6px; overflow: hidden; background: #aad3df; border-top: 1px solid #ddd; width: 700px; box-shadow: 0 1px 3px rgba(0,0,0,.3); font-family: "Liberation Sans", Arial, sans-serif; }
.world, .pins { position: absolute; left: 0; top: 0; width: 547px; height: 450px; }
.land path { fill: #f2efe9; stroke: #7fbfce; stroke-width: 3; stroke-linejoin: round; }
.land .isle { stroke-width: 1; stroke: #c8e0dc; }
.water path { fill: #aad3df; }
.borders path { fill: none; stroke: #d7a5d6; stroke-width: 3; opacity: .75; stroke-linejoin: round; }
.pinshadow { fill: #333; opacity: .4; filter: blur(3px); }
.popup { position: absolute; background: #fff; border-radius: 18px; box-shadow: 0 4px 20px rgba(0,0,0,.55); height: 67px; font-size: 18px; line-height: 66px; white-space: nowrap; color: #333; }
.popup span { position: relative; margin-left: 30px; }
.popup b { position: absolute; right: 9px; top: 6px; font-size: 27px; line-height: 26px; color: #c3c3c3; }
.tip::before { content: ""; position: absolute; top: 66px; left: var(--tip); border: 16px solid transparent; border-top-color: #fff; border-bottom: 0; }
.p1 { left: 421px; top: 50px; width: 160px; } .p2 { left: 380px; top: 59px; width: 180px; } .p3 { left: 384px; top: 84px; width: 156px; --tip: 101px; }
.p4 { left: 367px; top: 72px; width: 190px; --tip: 80px; } .p4 span { top: 1px; } .p4 b { right: 2px; }
.p5 { left: 45px; top: 125px; width: 137px; --tip: 53px; }
.zoom { position: absolute; left: 15px; top: 15px; border: 3px solid rgba(0,0,0,.25); border-radius: 6px; background-clip: padding-box; }
.zoom div { width: 45px; height: 45px; background: #fff; text-align: center; font: 34px/46px "Liberation Sans", sans-serif; color: #000; -webkit-text-stroke: .6px #000; }
.zoom div + div { border-top: 1px solid #ccc; }
.attr { position: absolute; left: 314px; right: 0; bottom: 0; height: 25px; padding-left: 8px; background: rgba(255,255,255,.7); font-size: 16.500px; line-height: 26px; white-space: nowrap; color: #333; }
.attr a { color: #0078a8; }

/* Output panel */
.outhead { display: flex; margin-top: 24px; }
h2 { width: 440px; font-size: 45.500px; font-weight: 400; line-height: 64px; letter-spacing: .1px; }
.download { width: 200px; background: #209cee; color: #fff; gap: 11px; padding-left: 15px; padding-top: 2px; }
.opts { display: flex; height: 36px; white-space: nowrap; letter-spacing: -.1px; }
.opts svg { width: 20px; height: 20px; margin: 5px 7px 0 0; }
.opts span { margin-top: -1px; }
.o1 { margin: 35px 0 18px; }
.k1 { width: 69px; } .k2 { width: 36px; } .k3 { width: 76px; } .k4 { width: 97px; } .k6 { letter-spacing: .15px; }
.output { margin-top: 15px; border: 1px solid #dbdbdb; border-radius: 5px; height: 200px; padding: 8px 17px; }

/* Page scrollbar */
.hscroll { height: 25px; flex: none; display: flex; background: #f0f0f0; border-top: 1px solid #fff; }
.hscroll svg { width: 26px; height: 24px; }
.hthumb { width: 1788px; background: #cdcdcd; }
.end { margin-left: auto; }

/* Taskbar */
.taskbar { height: 60px; flex: none; display: flex; background: linear-gradient(90deg, #1f1e23 0 48%, #050405 53%, #1a1312 58%, #150d0e 70%, #020202 78%); color: #fff; }
.start { width: 72px; background: #251400; display: flex; align-items: center; justify-content: center; }
.search { width: 516px; background: #f2f2f2; border-top: 1px solid #c0c0c0; display: flex; align-items: center; padding-left: 13px; font-size: 19.600px; color: #333; gap: 13px; }
.search span { padding-top: 3px; }
.mic { width: 18px; height: 24px; margin: 0 22px 0 auto; }
.taskview { width: 77px; padding-right: 5px; display: flex; align-items: center; justify-content: center; flex: none; }
.app { width: 59.150px; display: flex; align-items: center; justify-content: center; flex: none; position: relative; left: 0; }
.app svg { width: 34px; height: 34px; overflow: visible; }
.app svg.wide { width: 36px; }
.run::after { content: ""; position: absolute; left: 7px; right: 7px; bottom: 0; height: 3px; background: #76b9ed; }
.current { background: #4b494d; }
.current::after { left: 0; right: 0; }
.split::after { background: linear-gradient(90deg, #76b9ed 72%, #5b89ad 72%); }
.glyph { font: bold 15px "Open Sans", sans-serif; fill: #fff; }
.tray { width: 240px; height: 60px; margin-left: -1px; }
.clockzone { width: 233px; margin-left: auto; margin-right: 5px; border-right: 2px solid #777; background: #251400; display: flex; align-items: center; padding-left: 8px; flex: none; }
.clock { width: 112px; margin: 0 18px 0 13px; font-size: 17px; line-height: 28px; letter-spacing: -.15px; text-align: center; }
.clock div { white-space: nowrap; }
```
